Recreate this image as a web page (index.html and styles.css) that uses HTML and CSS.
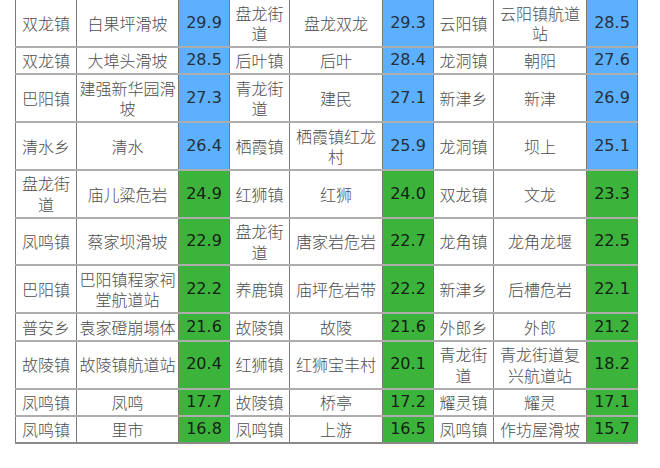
FILE: index.html
```html
<!DOCTYPE html>
<html lang="zh-CN">
<head>
<meta charset="utf-8">
<title>降雨量统计</title>
<link rel="stylesheet" href="styles.css">
</head>
<body>
<table class="rain">
  <colgroup>
    <col class="c-town"><col class="c-site-w"><col class="c-val">
    <col class="c-town2"><col class="c-site"><col class="c-val">
    <col class="c-town2"><col class="c-site"><col class="c-val">
  </colgroup>
  <tbody>
    <tr><td>双龙镇</td><td>白果坪滑坡</td><td class="blue">29.9</td><td>盘龙街道</td><td>盘龙双龙</td><td class="blue">29.3</td><td>云阳镇</td><td>云阳镇航道站</td><td class="blue">28.5</td></tr>
    <tr><td>双龙镇</td><td>大埠头滑坡</td><td class="blue">28.5</td><td>后叶镇</td><td>后叶</td><td class="blue">28.4</td><td>龙洞镇</td><td>朝阳</td><td class="blue">27.6</td></tr>
    <tr><td>巴阳镇</td><td>建强新华园滑坡</td><td class="blue">27.3</td><td>青龙街道</td><td>建民</td><td class="blue">27.1</td><td>新津乡</td><td>新津</td><td class="blue">26.9</td></tr>
    <tr><td>清水乡</td><td>清水</td><td class="blue">26.4</td><td>栖霞镇</td><td>栖霞镇红龙村</td><td class="blue">25.9</td><td>龙洞镇</td><td>坝上</td><td class="blue">25.1</td></tr>
    <tr><td>盘龙街道</td><td>庙儿粱危岩</td><td class="green">24.9</td><td>红狮镇</td><td>红狮</td><td class="green">24.0</td><td>双龙镇</td><td>文龙</td><td class="green">23.3</td></tr>
    <tr><td>凤鸣镇</td><td>蔡家坝滑坡</td><td class="green">22.9</td><td>盘龙街道</td><td>唐家岩危岩</td><td class="green">22.7</td><td>龙角镇</td><td>龙角龙堰</td><td class="green">22.5</td></tr>
    <tr><td>巴阳镇</td><td>巴阳镇程家祠堂航道站</td><td class="green">22.2</td><td>养鹿镇</td><td>庙坪危岩带</td><td class="green">22.2</td><td>新津乡</td><td>后槽危岩</td><td class="green">22.1</td></tr>
    <tr><td>普安乡</td><td>袁家磴崩塌体</td><td class="green">21.6</td><td>故陵镇</td><td>故陵</td><td class="green">21.6</td><td>外郎乡</td><td>外郎</td><td class="green">21.2</td></tr>
    <tr><td>故陵镇</td><td>故陵镇航道站</td><td class="green">20.4</td><td>红狮镇</td><td>红狮宝丰村</td><td class="green">20.1</td><td>青龙街道</td><td>青龙街道复兴航道站</td><td class="green">18.2</td></tr>
    <tr><td>凤鸣镇</td><td>凤鸣</td><td class="green">17.7</td><td>故陵镇</td><td>桥亭</td><td class="green">17.2</td><td>耀灵镇</td><td>耀灵</td><td class="green">17.1</td></tr>
    <tr><td>凤鸣镇</td><td>里市</td><td class="green">16.8</td><td>凤鸣镇</td><td>上游</td><td class="green">16.5</td><td>凤鸣镇</td><td>作坊屋滑坡</td><td class="green">15.7</td></tr>
  </tbody>
</table>
</body>
</html>
```
FILE: styles.css
```css
html, body {
  margin: 0;
  padding: 0;
  background: #ffffff;
}
body {
  padding-left: 15px;
  overflow: hidden;
}
.rain {
  margin-top: -2px;
  border-collapse: collapse;
  table-layout: fixed;
  width: 622px;
  font-family: "Noto Sans CJK SC", "DejaVu Sans", sans-serif;
  font-size: 16px;
  font-weight: 300;
  color: #4d4d4d;
}
.c-town { width: 61px; }
.c-town2 { width: 60px; }
.c-site-w { width: 102px; }
.c-site { width: 93px; }
.c-val { width: 51px; }
.rain td {
  border-left: 1px solid #7a7a7a;
  border-right: 1px solid #7a7a7a;
  border-top: 2px solid #adadad;
  border-bottom: 2px solid #adadad;
  padding: 2.5px 2px;
  line-height: 20.4px;
  text-align: center;
  vertical-align: middle;
  word-break: break-all;
}
.rain tr:last-child td {
  border-bottom-color: #8a8a8a;
}
.rain td.blue,
.rain td.green {
  font-family: "DejaVu Sans", "Noto Sans", sans-serif;
  font-size: 16px;
  font-weight: 400;
  padding: 2.5px 0;
}
.rain td.blue {
  background: #5cb0fd;
  color: #26303d;
}
.rain td.green {
  background: #3cb43c;
  color: #162016;
}
```
